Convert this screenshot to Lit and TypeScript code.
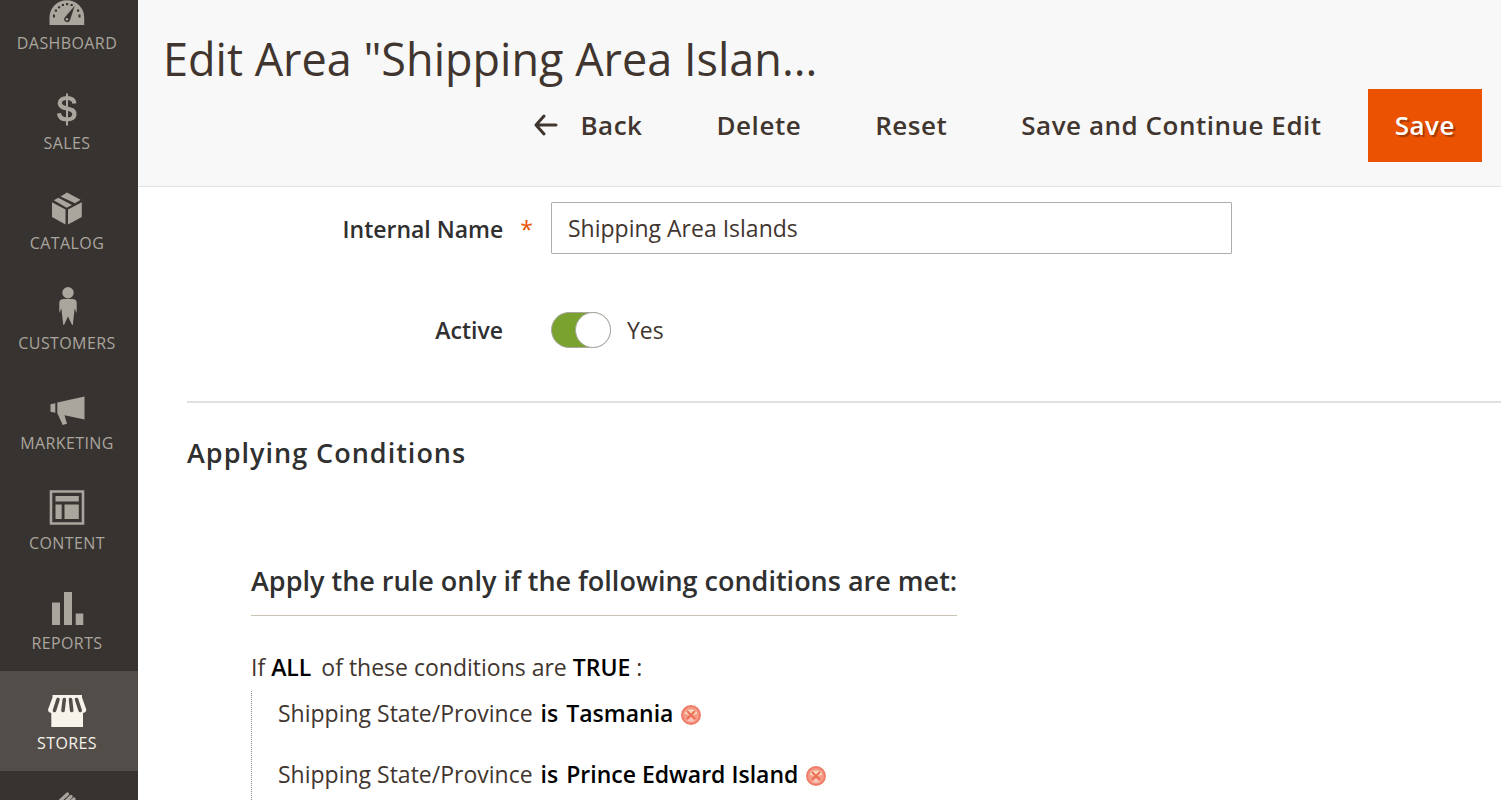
import { LitElement, html, css, svg } from "lit";
import { customElement, property, state } from "lit/decorators.js";

const icons: Record<string, unknown> = {
  dashboard: svg`<svg viewBox="0 -11 40 46"><path fill="currentColor" d="M2.500 29V21.500a17.300 17.300 0 0 1 34.700 0V29z"/><g fill="#373330"><rect x="6" y="18.500" width="2" height="3"/><rect x="31.500" y="18.500" width="2" height="3"/><rect x="7.800" y="13.500" width="2.200" height="2.200"/><rect x="11" y="10.300" width="2.200" height="2"/><rect x="14.800" y="8" width="2.200" height="2"/><rect x="19" y="7" width="2.200" height="2.200"/><rect x="23.500" y="8" width="2.200" height="2"/><rect x="30" y="13.500" width="2.200" height="2.200"/><path d="M27.700 9.800L22.900 24.500a3 3 0 1 1-5.400-2.700z"/></g><circle cx="19.900" cy="23.300" r="1.300" fill="currentColor"/></svg>`,
  sales: svg`<svg viewBox="0 -6 40 46"><path d="M27.500 12.500C27 8.500 24 7 20 7c-4.500 0-7.200 2-7.200 5 0 7.500 14.600 3.500 14.600 10.900 0 3.700-3 5.600-7.400 5.600-4.700 0-7.600-1.900-8-6.200" fill="none" stroke="currentColor" stroke-width="4.200"/><path d="M20 2.500v32" stroke="currentColor" stroke-width="2"/></svg>`,
  catalog: svg`<svg viewBox="0 -5 40 46"><g fill="currentColor"><path d="M5 12.200l13.500 7.300V34.500L5 27z"/><path d="M21 19.500L34.800 12.200V27L21 34.500z"/><path d="M6.800 10.300l4.500-2.500L25 15l-5.300 2.700z"/><path d="M13.500 6.500L20 2.500l13.500 7.300-5.500 3.400z"/></g></svg>`,
  customers: svg`<svg viewBox="0 -1 40 46"><g fill="currentColor"><circle cx="21" cy="6.700" r="5.700"/><path d="M12.300 27V17q0-4 4.500-4h8.400q4.500 0 4.500 4v10l-2-4.500-1.900 16.500h-.700L21 30.500l-4 8.500h-.700L14.300 22.500z"/></g></svg>`,
  marketing: svg`<svg viewBox="0 -9 40 46"><g fill="currentColor"><path d="M3.500 10.200l4.800-1v9.600l-4.800-1z"/><path d="M10.300 8.500L37.500 2.500v23L17.500 21.300 20 29.700l-4.300 1.300L11 20.500l-.700-1z"/></g></svg>`,
  content: svg`<svg viewBox="0 -3 40 46"><path d="M4 3.500h32v32H4z" fill="none" stroke="currentColor" stroke-width="2.600"/><path fill="currentColor" d="M8.500 8H31.800v5.500H8.500zM8.500 16.500h6.200v14.500H8.500zM17.500 16.500h14.300v14.500H17.500z"/></svg>`,
  reports: svg`<svg viewBox="0 -5 40 46"><path fill="currentColor" d="M5 12.500h8V35H5zM17 2h8v33h-8zM28.700 23.500h7.600V35h-7.600z"/></svg>`,
  stores: svg`<svg viewBox="0 -5 40 46"><path fill="currentColor" d="M5.500 5h29.500v2.500l4.300 12q0 3-3.300 3.500V37H4.300V23Q1 22.500 1 19.500L5.500 7.500z"/><g stroke="#524d49" stroke-width="3.600" stroke-linecap="round"><path d="M11 9.500L7.500 20.500M17.300 9.500l-1.300 11M23.500 9.500l1.200 11M29.600 9.500l3.600 11"/></g></svg>`,
  system: svg`<svg viewBox="0 -5 40 46"><g stroke="currentColor" stroke-width="3.200" stroke-linecap="round"><path d="M13 11l7.500-7M15 15l9-8.500M20 15l7-6M12 20l16 14"/></g></svg>`,
};

@customElement("nav-item")
class NavItem extends LitElement {
  @property() name = "";
  @property() label = "";
  @property({ type: Boolean }) active = false;

  static styles = css`
    :host { display: block; }
    .link {
      display: flex;
      flex-direction: column;
      align-items: center;
      box-sizing: border-box;
      height: 100px;
      padding: 14px 4px 0 0;
      color: #aaa59d;
      text-decoration: none;
      font-size: 16px;
      line-height: 24px;
      letter-spacing: 0.025em;
      text-transform: uppercase;
    }
    .current { background: #524d49; color: #f7f3eb; }
    .icon { width: 40px; height: 46px; }
    .icon svg { display: block; }
  `;

  render() {
    return html`<a class="link ${this.active ? "current" : ""}" href="#${this.name}" aria-label=${this.name}>
      <span class="icon">${icons[this.name]}</span><span>${this.label}</span>
    </a>`;
  }
}

@customElement("rule-condition")
class RuleCondition extends LitElement {
  @property() value = "";

  static styles = css`
    :host { display: flex; align-items: center; gap: 8px; line-height: 31px; }
    .choice { color: #000; font-weight: 600; text-decoration: none; }
    .remove {
      display: flex;
      border: 0;
      padding: 2px 0 0;
      background: none;
    }
  `;

  render() {
    return html`
      <span>Shipping State/Province</span>
      <a class="choice" href="#operator">is</a>
      <a class="choice" href="#value">${this.value}</a>
      <button class="remove" aria-label="Remove ${this.value}">
        <svg width="20" height="20" viewBox="0 0 20 20">
          <circle cx="10" cy="10" r="9" fill="#f49a86" stroke="#ee7d69" stroke-width="2" />
          <path d="M3.500 8.500a7 6.500 0 0 1 13 0q-6.500 3-13 0z" fill="#f9d9c0" />
          <path d="M6 15.500q4 2.500 8 0l-4-3.500z" fill="#f8c3b8" />
          <path d="M6 6l8 8M14 6l-8 8" stroke="#ec6f55" stroke-width="2" />
        </svg>
      </button>`;
  }
}

@customElement("app-root")
class AppRoot extends LitElement {
  @state() private enabled = true;

  private nav = ["dashboard", "sales", "catalog", "customers", "marketing", "content", "reports", "stores"];

  static styles = css`
    :host {
      display: grid;
      grid-template-columns: 138px minmax(0, 1fr);
      height: 100vh;
      overflow: hidden;
      font-family: "Open Sans", "Noto Sans", sans-serif;
      font-size: 23px;
      color: #41362f;
      background: #fff;
    }
    .sidebar {
      display: flex;
      flex-direction: column;
      justify-content: flex-start;
      margin-top: -29px;
      background: #373330;
    }
    .main { min-width: 0; }
    .header {
      padding: 28px 19px 24px 25px;
      background: #f8f8f8;
      border-bottom: 1px solid #e3e3e3;
    }
    .title {
      margin: 0;
      overflow: hidden;
      white-space: nowrap;
      text-overflow: ellipsis;
      font-size: 45px;
      font-weight: 400;
      line-height: 61px;
    }
    .actions { display: flex; justify-content: flex-end; align-items: center; }
    .action {
      display: flex;
      align-items: center;
      gap: 22px;
      box-sizing: border-box;
      height: 73px;
      margin: 0;
      border: 0;
      padding: 0 28px 2px;
      background: none;
      color: #41362f;
      font: 600 26px/36px "Open Sans", "Noto Sans", sans-serif;
      letter-spacing: 0.02em;
    }
    .action + .action { margin-left: 18px; }
    .action.primary {
      background: #eb5202;
      color: #fff;
      padding: 0 27px 2px;
      text-shadow: 2px 2px 1px rgba(0, 0, 0, 0.3);
    }
    .form {
      display: grid;
      grid-template-columns: 365px minmax(0, 1fr);
      column-gap: 48px;
      row-gap: 58px;
      align-items: center;
      padding-top: 15px;
    }
    .label { color: #303030; font-weight: 600; text-align: right; }
    .required { display: flex; justify-content: flex-end; gap: 17px; margin-right: -30px; padding-top: 2px; }
    .star { color: #eb5202; font-weight: 400; }
    .input {
      box-sizing: border-box;
      width: calc(100% - 269px);
      height: 52px;
      border: 1px solid #adadad;
      border-radius: 1px;
      padding: 0 16px;
      color: #41362f;
      font: 400 23px/32px "Open Sans", "Noto Sans", sans-serif;
    }
    .toggle { display: flex; align-items: center; gap: 16px; }
    .switch {
      appearance: none;
      box-sizing: border-box;
      display: flex;
      width: 60px;
      height: 36px;
      margin: 0;
      border: 1px solid #aaa6a0;
      border-radius: 18px;
      background: #e3e3e3;
    }
    .switch::before {
      content: "";
      box-sizing: border-box;
      width: 36px;
      height: 36px;
      margin: -1px;
      border: 1px solid #aaa6a0;
      border-radius: 50%;
      background: #fff;
    }
    .switch:checked { justify-content: flex-end; background: #79a22e; }
    .section {
      margin: 53px 0 0 49px;
      border-top: 2px solid #e0e0e0;
      padding-top: 30px;
    }
    .heading {
      margin: 0;
      color: #303030;
      font-size: 27px;
      font-weight: 600;
      line-height: 40px;
      letter-spacing: 1px;
    }
    .rules { padding: 88px 0 0 64px; }
    .legend {
      display: inline-block;
      border-bottom: 1px solid #cac3b4;
      padding-bottom: 14px;
      margin: 0;
      color: #303030;
      font-size: 27px;
      font-weight: 600;
      line-height: 40px;
    }
    .summary { margin: 36px 0 0; line-height: 31px; }
    .choice { color: #000; font-weight: 600; text-decoration: none; }
    .all { margin-right: 4px; }
    .list {
      display: flex;
      flex-direction: column;
      gap: 30px;
      margin: 8px 0 0;
      border-left: 1px dotted #888;
      padding: 7px 0 30px 26px;
      list-style: none;
    }
  `;

  private toggle(e: Event) {
    this.enabled = (e.target as HTMLInputElement).checked;
  }

  render() {
    return html`
      <nav class="sidebar">
        ${this.nav.map((n) => html`<nav-item name=${n} label=${n} ?active=${n === "stores"}></nav-item>`)}
        <nav-item name="system"></nav-item>
      </nav>
      <main class="main">
        <header class="header">
          <h1 class="title">Edit Area "Shipping Area Islan...</h1>
          <div class="actions">
            <button class="action">
              <svg width="24" height="22" viewBox="0 0 24 22" fill="none" stroke="currentColor" stroke-width="3" stroke-linecap="round" stroke-linejoin="round"><path d="M10 2L2 11l8 9M2.500 11H22" /></svg>
              Back
            </button>
            <button class="action">Delete</button>
            <button class="action">Reset</button>
            <button class="action">Save and Continue Edit</button>
            <button class="action primary">Save</button>
          </div>
        </header>
        <div class="form">
          <label class="label required" for="name"><span>Internal Name</span><span class="star">*</span></label>
          <input class="input" id="name" type="text" value="Shipping Area Islands" />
          <label class="label" for="active">Active</label>
          <div class="toggle">
            <input class="switch" id="active" type="checkbox" .checked=${this.enabled} @change=${this.toggle} />
            <span>${this.enabled ? "Yes" : "No"}</span>
          </div>
        </div>
        <section class="section">
          <h2 class="heading">Applying Conditions</h2>
          <div class="rules">
            <h3 class="legend">Apply the rule only if the following conditions are met:</h3>
            <p class="summary">
              If <a class="choice all" href="#all">ALL</a> of these conditions are
              <a class="choice" href="#true">TRUE</a> :
            </p>
            <ul class="list">
              <li><rule-condition value="Tasmania"></rule-condition></li>
              <li><rule-condition value="Prince Edward Island"></rule-condition></li>
            </ul>
          </div>
        </section>
      </main>
    `;
  }
}
